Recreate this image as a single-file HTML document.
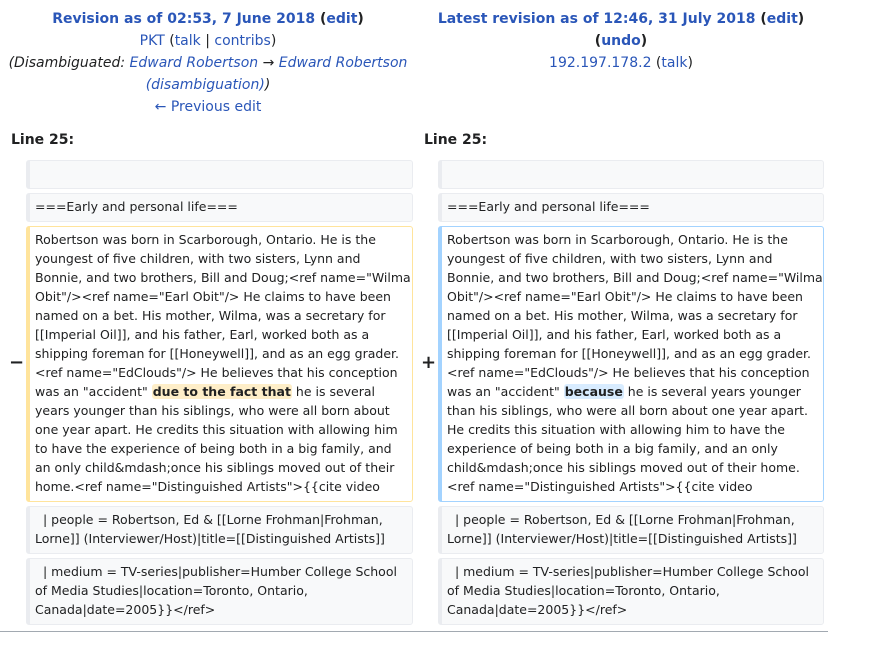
<!DOCTYPE html>
<html><head><meta charset="utf-8"><style>
body{margin:0;width:874px;height:648px;background:#fff;font-family:"DejaVu Sans","Liberation Sans",sans-serif;color:#202122;position:relative;overflow:hidden}
.h{position:absolute;text-align:center;font-size:14px;line-height:22px;white-space:nowrap}
a{color:#2a56b8;text-decoration:none}
.b{font-weight:bold}
.i{font-style:italic}
.ln{position:absolute;font-weight:bold;font-size:14px;top:132px}
.bx{position:absolute;box-sizing:border-box;border:1px solid #eaecf0;border-left-width:4px;border-radius:3px;background:#f8f9fa;font-size:12.5px;line-height:19px;padding:3px 0 0 5px;white-space:nowrap;color:#202122}
.del{background:#fff;border-color:#ffe49c}
.add{background:#fff;border-color:#a3d3ff}
.dw{background:#feeec8;font-weight:bold;border-radius:3px;padding:0 1px}
.aw{background:#d8ecff;font-weight:bold;border-radius:3px;padding:0 1px}
.mk{position:absolute;font-size:18px;font-weight:bold;top:352px}
</style></head><body>
<div class="h" style="left:0;width:416px;top:8px">
<span class="b"><a>Revision as of 02:53, 7 June 2018</a> (<a>edit</a>)</span><br>
<a>PKT</a> (<a>talk</a> | <a>contribs</a>)<br>
<span class="i">(Disambiguated: <a>Edward Robertson</a> → <a>Edward Robertson</a><br><a>(disambiguation)</a>)</span><br>
<a>← Previous edit</a>
</div>
<div class="h" style="left:413px;width:416px;top:8px">
<span class="b"><a>Latest revision as of 12:46, 31 July 2018</a> (<a>edit</a>)<br>(<a>undo</a>)</span><br>
<a>192.197.178.2</a> (<a>talk</a>)
</div>
<div class="ln" style="left:11px">Line 25:</div>
<div class="ln" style="left:424px">Line 25:</div>
<div class="mk" style="left:9px">−</div>
<div class="mk" style="left:421px">+</div>

<div class="bx" style="left:26px;top:160px;width:387px;height:29px"></div>
<div class="bx" style="left:26px;top:193px;width:387px;height:29px;padding-top:3px">===Early and personal life===</div>
<div class="bx del" style="left:26px;top:226px;width:387px;height:276px;padding-top:3px">Robertson was born in Scarborough, Ontario. He is the<br>youngest of five children, with two sisters, Lynn and<br>Bonnie, and two brothers, Bill and Doug;&lt;ref name="Wilma<br>Obit"/&gt;&lt;ref name="Earl Obit"/&gt; He claims to have been<br>named on a bet. His mother, Wilma, was a secretary for<br>[[Imperial Oil]], and his father, Earl, worked both as a<br>shipping foreman for [[Honeywell]], and as an egg grader.<br>&lt;ref name="EdClouds"/&gt; He believes that his conception<br>was an "accident" <span class="dw">due to the fact that</span> he is several<br>years younger than his siblings, who were all born about<br>one year apart. He credits this situation with allowing him<br>to have the experience of being both in a big family, and<br>an only child&amp;mdash;once his siblings moved out of their<br>home.&lt;ref name="Distinguished Artists"&gt;{{cite video</div>
<div class="bx" style="left:26px;top:506px;width:387px;height:48px;padding-top:3px">&nbsp; | people = Robertson, Ed &amp; [[Lorne Frohman|Frohman,<br>Lorne]] (Interviewer/Host)|title=[[Distinguished Artists]]</div>
<div class="bx" style="left:26px;top:558px;width:387px;height:67px;padding-top:3px">&nbsp; | medium = TV-series|publisher=Humber College School<br>of Media Studies|location=Toronto, Ontario,<br>Canada|date=2005}}&lt;/ref&gt;</div>

<div class="bx" style="left:438px;top:160px;width:386px;height:29px"></div>
<div class="bx" style="left:438px;top:193px;width:386px;height:29px;padding-top:3px">===Early and personal life===</div>
<div class="bx add" style="left:438px;top:226px;width:386px;height:276px;padding-top:3px">Robertson was born in Scarborough, Ontario. He is the<br>youngest of five children, with two sisters, Lynn and<br>Bonnie, and two brothers, Bill and Doug;&lt;ref name="Wilma<br>Obit"/&gt;&lt;ref name="Earl Obit"/&gt; He claims to have been<br>named on a bet. His mother, Wilma, was a secretary for<br>[[Imperial Oil]], and his father, Earl, worked both as a<br>shipping foreman for [[Honeywell]], and as an egg grader.<br>&lt;ref name="EdClouds"/&gt; He believes that his conception<br>was an "accident" <span class="aw">because</span> he is several years younger<br>than his siblings, who were all born about one year apart.<br>He credits this situation with allowing him to have the<br>experience of being both in a big family, and an only<br>child&amp;mdash;once his siblings moved out of their home.<br>&lt;ref name="Distinguished Artists"&gt;{{cite video</div>
<div class="bx" style="left:438px;top:506px;width:386px;height:48px;padding-top:3px">&nbsp; | people = Robertson, Ed &amp; [[Lorne Frohman|Frohman,<br>Lorne]] (Interviewer/Host)|title=[[Distinguished Artists]]</div>
<div class="bx" style="left:438px;top:558px;width:386px;height:67px;padding-top:3px">&nbsp; | medium = TV-series|publisher=Humber College School<br>of Media Studies|location=Toronto, Ontario,<br>Canada|date=2005}}&lt;/ref&gt;</div>

<div style="position:absolute;left:0;top:631px;width:828px;height:1px;background:#a2a9b1"></div>
</body></html>
